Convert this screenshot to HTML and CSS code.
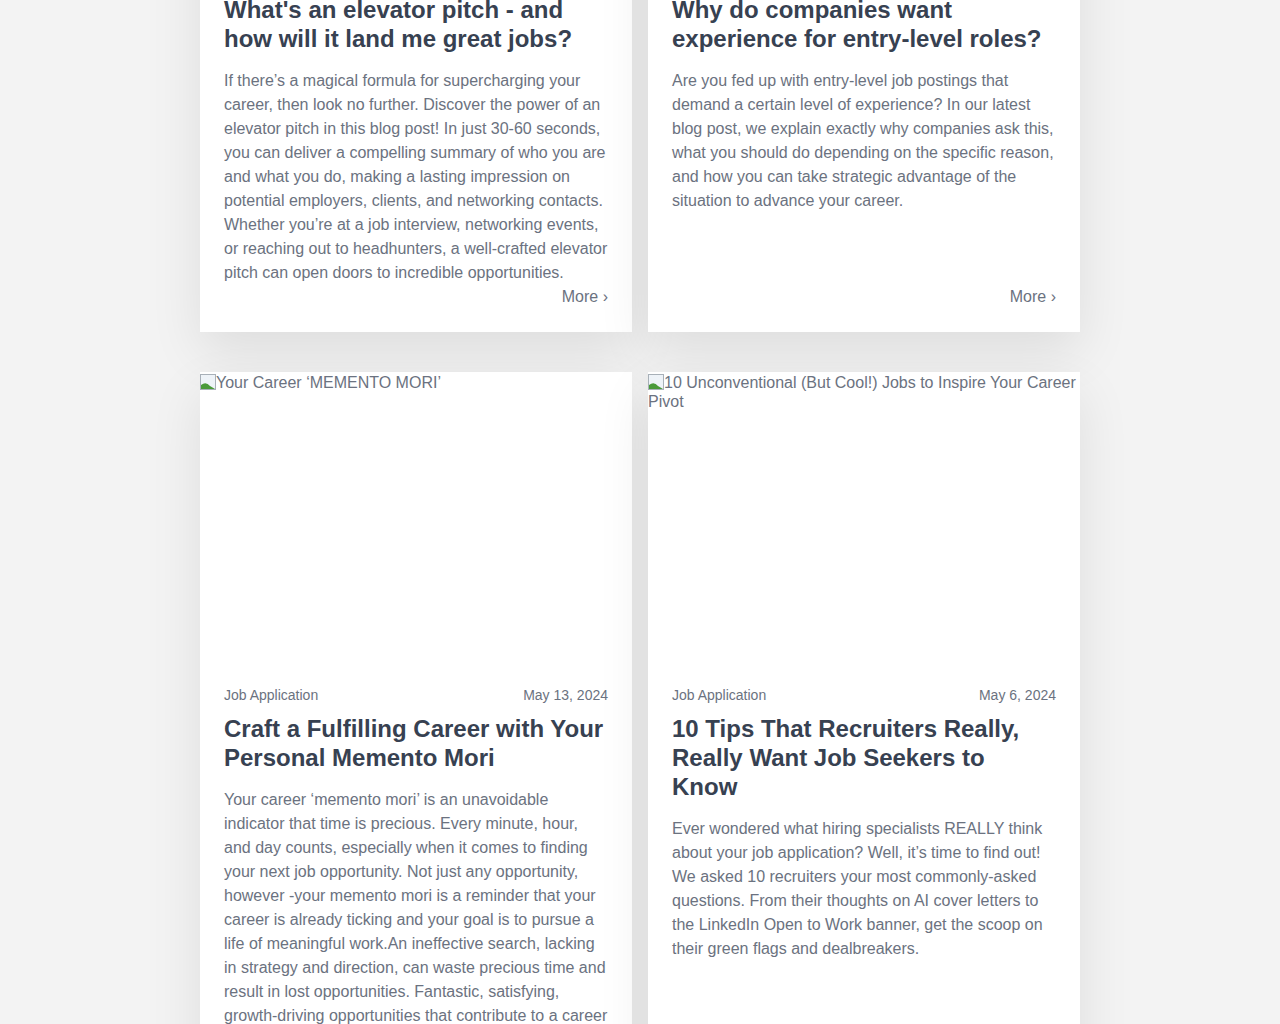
FILE: index.html
```html
<!DOCTYPE html>
<html lang="en">
<head>
<meta charset="utf-8">
<title>Blog</title>
<link rel="stylesheet" href="styles.css">
</head>
<body>
<main class="grid">
  <article class="card">
    <div class="media"><span class="broken"><svg width="16" height="16" viewBox="0 0 16 16"><rect x="0.5" y="0.5" width="15" height="15" fill="#eef3f8" stroke="#a8b0b8"/><path d="M1 15 L1 11 Q6 7 10 12 L15 15 Z" fill="#4a9a3a"/></svg>What's an elevator pitch</span></div>
    <div class="body">
      <div class="meta"><span>Job Application</span><span>May 20, 2024</span></div>
      <h2 class="title">What's an elevator pitch - and how will it land me great jobs?</h2>
      <p class="text">If there’s a magical formula for supercharging your career, then look no further. Discover the power of an elevator pitch in this blog post! In just 30-60 seconds, you can deliver a compelling summary of who you are and what you do, making a lasting impression on potential employers, clients, and networking contacts. Whether you’re at a job interview, networking events, or reaching out to headhunters, a well-crafted elevator pitch can open doors to incredible opportunities.</p>
      <a class="more" href="#">More ›</a>
    </div>
  </article>
  <article class="card">
    <div class="media"><span class="broken"><svg width="16" height="16" viewBox="0 0 16 16"><rect x="0.5" y="0.5" width="15" height="15" fill="#eef3f8" stroke="#a8b0b8"/><path d="M1 15 L1 11 Q6 7 10 12 L15 15 Z" fill="#4a9a3a"/></svg>Why do companies want experience</span></div>
    <div class="body">
      <div class="meta"><span>Job Application</span><span>May 20, 2024</span></div>
      <h2 class="title">Why do companies want experience for entry-level roles?</h2>
      <p class="text">Are you fed up with entry-level job postings that demand a certain level of experience? In our latest blog post, we explain exactly why companies ask this, what you should do depending on the specific reason, and how you can take strategic advantage of the situation to advance your career.</p>
      <a class="more" href="#">More ›</a>
    </div>
  </article>
  <article class="card">
    <div class="media"><span class="broken"><svg width="16" height="16" viewBox="0 0 16 16"><rect x="0.5" y="0.5" width="15" height="15" fill="#eef3f8" stroke="#a8b0b8"/><path d="M1 15 L1 11 Q6 7 10 12 L15 15 Z" fill="#4a9a3a"/></svg>Your Career ‘MEMENTO MORI’</span></div>
    <div class="body">
      <div class="meta"><span>Job Application</span><span>May 13, 2024</span></div>
      <h2 class="title">Craft a Fulfilling Career with Your Personal Memento Mori</h2>
      <p class="text">Your career ‘memento mori’ is an unavoidable indicator that time is precious. Every minute, hour, and day counts, especially when it comes to finding your next job opportunity. Not just any opportunity, however -your memento mori is a reminder that your career is already ticking and your goal is to pursue a life of meaningful work.An ineffective search, lacking in strategy and direction, can waste precious time and result in lost opportunities. Fantastic, satisfying, growth-driving opportunities that contribute to a career you love are out there, waiting for you to find them.</p>
      <a class="more" href="#">More ›</a>
    </div>
  </article>
  <article class="card">
    <div class="media"><span class="broken"><svg width="16" height="16" viewBox="0 0 16 16"><rect x="0.5" y="0.5" width="15" height="15" fill="#eef3f8" stroke="#a8b0b8"/><path d="M1 15 L1 11 Q6 7 10 12 L15 15 Z" fill="#4a9a3a"/></svg>10 Unconventional (But Cool!) Jobs to Inspire Your Career Pivot</span></div>
    <div class="body">
      <div class="meta"><span>Job Application</span><span>May 6, 2024</span></div>
      <h2 class="title">10 Tips That Recruiters Really, Really Want Job Seekers to Know</h2>
      <p class="text">Ever wondered what hiring specialists REALLY think about your job application? Well, it’s time to find out! We asked 10 recruiters your most commonly-asked questions. From their thoughts on AI cover letters to the LinkedIn Open to Work banner, get the scoop on their green flags and dealbreakers.</p>
      <a class="more" href="#">More ›</a>
    </div>
  </article>
</main>
</body>
</html>
```
FILE: styles.css
```css
html, body {
  margin: 0;
  padding: 0;
  background: #f3f3f3;
  overflow: hidden;
}
body {
  font-family: "Liberation Sans", Arial, sans-serif;
  color: #6b7280;
}
.grid {
  width: 880px;
  margin: -347px auto 0;
  display: grid;
  grid-template-columns: 432px 432px;
  column-gap: 16px;
  row-gap: 40px;
}
.card {
  background: #fff;
  display: flex;
  flex-direction: column;
  box-shadow: 0 20px 50px rgba(0, 0, 0, 0.09);
}
.media {
  height: 289px;
  font-size: 16px;
  line-height: 19px;
  color: #6b7280;
  padding-top: 1px;
  box-sizing: border-box;
}
.broken svg {
  vertical-align: -2px;
}
.body {
  padding: 24px 24px 23px;
  display: flex;
  flex-direction: column;
  flex: 1;
}
.meta {
  display: flex;
  justify-content: space-between;
  font-size: 14px;
  line-height: 20px;
  color: #6b7280;
}
.title {
  margin: 9px 0 0;
  font-size: 24px;
  line-height: 29px;
  font-weight: 700;
  color: #374151;
}
.text {
  margin: 16px 0 0;
  font-size: 16px;
  line-height: 24px;
  color: #6b7280;
}
.more {
  margin-top: auto;
  align-self: flex-end;
  font-size: 16px;
  line-height: 24px;
  color: #6b7280;
  text-decoration: none;
}
```
